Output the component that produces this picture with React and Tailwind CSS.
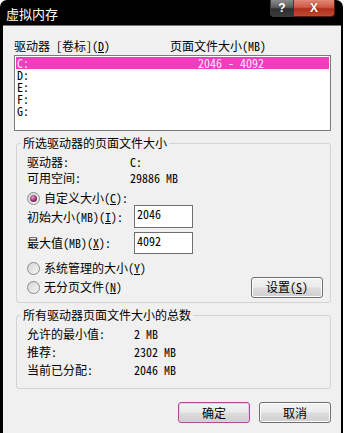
import React from "react";

function Radio({ checked }) {
  return (
    <span className="w-[13px] h-[13px] rounded-full border border-[#8a8a8a] bg-[linear-gradient(135deg,#d4d4d4,#f6f6f6)] flex items-center justify-center shrink-0">
      {checked && (
        <span className="w-[7px] h-[7px] rounded-full bg-[radial-gradient(circle_at_40%_35%,#e79ccd,#8a2566_60%,#5e1444)]" />
      )}
    </span>
  );
}

function Btn({ children, primary }) {
  return (
    <div
      className={
        "w-[72px] h-[21px] rounded-[3px] border flex items-center justify-center text-[12px] leading-[12px] bg-[linear-gradient(#f3f3f3_0%,#ebebeb_48%,#dddddd_52%,#cfcfcf_100%)] " +
        (primary
          ? "border-[#b04a98] shadow-[inset_0_0_0_1px_#f2c4e6]"
          : "border-[#707070] shadow-[inset_0_0_0_1px_#fbfbfb]")
      }
    >
      {children}
    </div>
  );
}

function TextBox({ value }) {
  return (
    <div className="w-[59px] h-full border border-[#6f6f6f] bg-white pl-[2px] pt-[2px] text-[12px] leading-[12px]">
      {value}
    </div>
  );
}

export default function App() {
  return (
    <div className="w-[346px] h-[433px] bg-white overflow-hidden font-['Noto_Sans_Mono_CJK_SC','Noto_Sans_CJK_SC',sans-serif] text-black">
      <div className="w-[343px] h-[433px] bg-black rounded-t-[7px] flex flex-col pl-[3px] pr-[2px]">
        {/* title bar */}
        <div className="h-[25px] shrink-0 flex items-start">
          <span className="mt-[5px] ml-[3px] text-white text-[13px] leading-[17px] font-['Noto_Sans_CJK_SC',sans-serif]">
            虚拟内存
          </span>
          <div className="ml-auto mr-[6px] flex">
            <div className="w-[24px] h-[17px] rounded-bl-[4px] border border-t-0 border-[#3a3a3a] bg-[linear-gradient(#8a8a8a_0%,#5c5c5c_45%,#2e2e2e_55%,#3a3a3a_100%)] flex items-center justify-center text-white text-[12px] font-bold leading-[12px] font-['Liberation_Sans',sans-serif]">
              ?
            </div>
            <div className="w-[41px] h-[17px] rounded-br-[4px] border border-t-0 border-l-0 border-[#5a1a10] bg-[linear-gradient(#e08a78_0%,#cf5a44_45%,#b0301c_55%,#c04a32_100%)] flex items-center justify-center text-white text-[12px] font-bold leading-[12px] font-['Liberation_Sans',sans-serif] [text-shadow:0_0_2px_#7a1a0c]">
              X
            </div>
          </div>
        </div>
        {/* content */}
        <div className="flex-1 bg-[#f0f0f0] border-t border-[#777777] flex flex-col">
          <div className="mt-[14px] ml-[11px] h-[12px] flex text-[12px] leading-[12px]">
            <span className="w-[156px]">
              驱动器 [卷标](<u>D</u>)
            </span>
            <span>页面文件大小(MB)</span>
          </div>
          <div className="mt-[3px] ml-[11px] w-[317px] h-[76px] border border-[#7a7a7a] bg-white p-[1px] text-[12px] leading-[12px]">
            <div className="h-[12px] bg-[#ef3dbd] text-[#fde6f6] flex pl-[1px]">
              <span className="w-[181px]">C:</span>
              <span>2046 - 4092</span>
            </div>
            <div className="h-[12px] pl-[1px]">D:</div>
            <div className="h-[12px] pl-[1px]">E:</div>
            <div className="h-[12px] pl-[1px]">F:</div>
            <div className="h-[12px] pl-[1px]">G:</div>
          </div>

          <fieldset className="mt-[6px] ml-[13px] w-[315px] border border-[#d3d3d3] rounded-[3px] min-w-0 pb-[5px] text-[12px] leading-[12px]">
            <legend className="ml-[4px] px-[2px] h-[12px]">所选驱动器的页面文件大小</legend>
            <div className="pl-[10px] pt-[5px] flex flex-col">
              <div className="h-[16px] flex items-center">
                <span className="w-[103px]">驱动器:</span>
                <span>C:</span>
              </div>
              <div className="h-[16px] flex items-center">
                <span className="w-[103px]">可用空间:</span>
                <span>29886 MB</span>
              </div>
              <div className="mt-[5px] h-[14px] flex items-center gap-[4px]">
                <Radio checked />
                <span>
                  自定义大小(<u>C</u>):
                </span>
              </div>
              <div className="h-[23px] flex items-center">
                <span className="w-[107px]">
                  初始大小(MB)(<u>I</u>):
                </span>
                <TextBox value="2046" />
              </div>
              <div className="mt-[4px] h-[22px] flex items-center">
                <span className="w-[107px]">
                  最大值(MB)(<u>X</u>):
                </span>
                <TextBox value="4092" />
              </div>
              <div className="mt-[6px] h-[16px] flex items-center gap-[4px]">
                <Radio />
                <span>
                  系统管理的大小(<u>Y</u>)
                </span>
              </div>
              <div className="mt-[1px] h-[20px] flex items-center gap-[4px] pr-[7px]">
                <Radio />
                <span>
                  无分页文件(<u>N</u>)
                </span>
                <div className="ml-auto">
                  <Btn>
                    设置(<u>S</u>)
                  </Btn>
                </div>
              </div>
            </div>
          </fieldset>

          <fieldset className="mt-[6px] ml-[13px] w-[315px] border border-[#d3d3d3] rounded-[3px] min-w-0 pb-[9px] text-[12px] leading-[12px]">
            <legend className="ml-[4px] px-[2px] h-[12px]">所有驱动器页面文件大小的总数</legend>
            <div className="pl-[10px] pt-[4px] flex flex-col">
              <div className="h-[18px] flex items-center">
                <span className="w-[107px]">允许的最小值:</span>
                <span>2 MB</span>
              </div>
              <div className="h-[18px] flex items-center">
                <span className="w-[107px]">推荐:</span>
                <span>2302 MB</span>
              </div>
              <div className="h-[18px] flex items-center">
                <span className="w-[107px]">当前已分配:</span>
                <span>2046 MB</span>
              </div>
            </div>
          </fieldset>

          <div className="mt-[13px] pr-[10px] flex justify-end gap-[9px]">
            <Btn primary>确定</Btn>
            <Btn>取消</Btn>
          </div>
        </div>
      </div>
    </div>
  );
}
